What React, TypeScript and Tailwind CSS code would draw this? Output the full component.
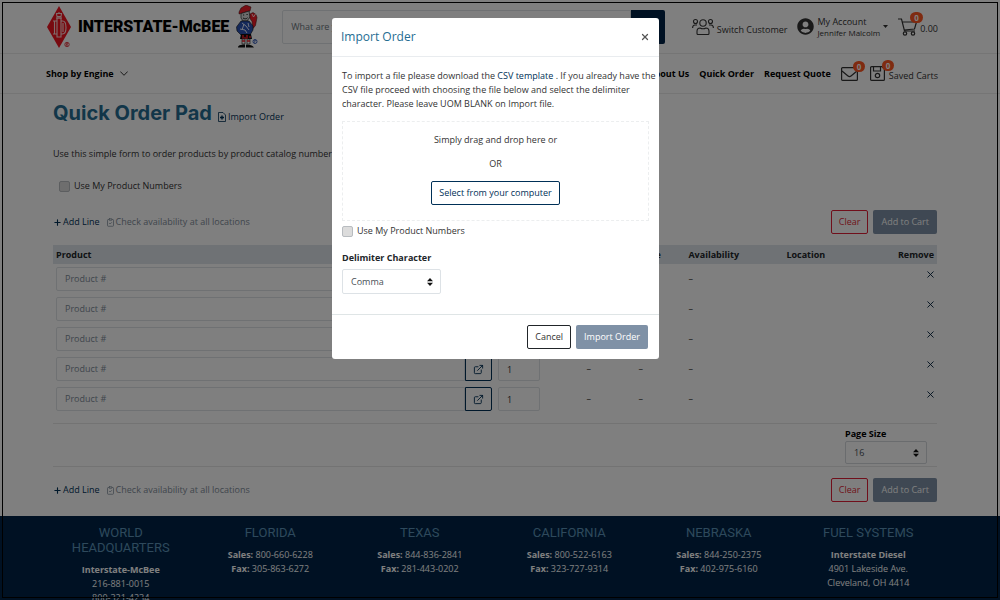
import { useState } from 'react';
import { ClipboardCheck, ExternalLink, Plus, Search, X } from 'lucide-react';
import { FaUserCircle } from 'react-icons/fa';

const lines = [1, 2, 3, 4, 5];

const offices = [
  { title: 'World Headquarters', name: 'Interstate-McBee', rows: ['216-881-0015', '800-321-4234'] },
  { title: 'Florida', sales: '800-660-6228', fax: '305-863-6272' },
  { title: 'Texas', sales: '844-836-2841', fax: '281-443-0202' },
  { title: 'California', sales: '800-522-6163', fax: '323-727-9314' },
  { title: 'Nebraska', sales: '844-250-2375', fax: '402-975-6160' },
  { title: 'Fuel Systems', name: 'Interstate Diesel', rows: ['4901 Lakeside Ave.', 'Cleveland, OH 4414'] },
];

function DiamondLogo() {
  return (
    <svg className="w-6 h-[42px]" viewBox="0 0 24 42" fill="none">
      <path d="M12 0 24 21 12 42 0 21Z" fill="#f01420" />
      <g stroke="#ffd9d9" strokeWidth="1.1">
        <path d="M9.500 7.500h5l-.5 3h-4zM12 6v1.500M9 12h6" />
        <path d="M10 12v19h4V12z" />
        <path d="M6 15h4M6 28h4M7.500 15v13M14 15h1.500c2.500 0 3.500 3 3.500 6.500s-1 6.500-3.500 6.500H14M16 17v9" />
      </g>
      <circle cx="20" cy="38.500" r="2.200" stroke="#e01f2a" strokeWidth=".8" />
      <path d="M19.300 40v-3h1.200v1.500h-1l1.200 1.500" stroke="#e01f2a" strokeWidth=".6" />
    </svg>
  );
}

function Mascot() {
  return (
    <svg className="w-[22px] h-[43px]" viewBox="0 0 22 43" fill="none">
      <path d="M3 7 5 3l5-3 5 2-1 4-7 2-4 1z" fill="#f01c28" stroke="#301010" strokeWidth=".5" />
      <path d="M5 8.500 13 6l1 6-3 4H7l-2-3z" fill="#d8d8d8" stroke="#222" strokeWidth=".7" />
      <path d="M7 10h1.200M10.500 9.500h1.200M7 13c2 1.200 3.500 1 4.500-.3" stroke="#111" strokeWidth=".9" />
      <path d="M14 9l3-1.500 3 2 1 3-1.500 8-2.500 3-1-7-2-3z" fill="#f01c28" stroke="#301010" strokeWidth=".5" />
      <path d="M16 9l1.500 3 2-3" stroke="#fff" strokeWidth=".8" />
      <path d="M5 16h8l4 5v4l-3 5H5l-4-4-.5-4z" fill="#2a52b4" stroke="#111" strokeWidth=".6" />
      <path d="M6 18l4 3 3 4M4 24l5 1 2 3M8 19l-2 6M12 18l1 4" stroke="#e6ecff" strokeWidth="1" />
      <path d="M5 29h10l1 5H4z" fill="#111" />
      <path d="M6 31h2M10 31h2M13 32h2M6 33h6" stroke="#f01c28" strokeWidth="1.400" />
      <path d="M6 34h3v5H6zM11 34h3v5h-3z" fill="#fff" stroke="#111" strokeWidth=".6" />
      <path d="M6 36h3M11 36h3" stroke="#f01c28" strokeWidth="1.300" />
      <path d="M2 42.500c0-2 2-3 7-3v3zM10 42.500v-3c4 0 7 1 8 3z" fill="#111" />
      <circle cx="19" cy="36.500" r="2" stroke="#2a52b4" strokeWidth=".9" />
      <path d="M18.500 37.800v-2.600h1v1.200" stroke="#2a52b4" strokeWidth=".6" />
    </svg>
  );
}

function UsersIcon() {
  return (
    <svg className="w-[22px] h-[17px]" viewBox="0 0 22 17" fill="none" stroke="currentColor" strokeWidth="1.1">
      <circle cx="11" cy="5" r="3.200" />
      <circle cx="3.500" cy="3.500" r="2" />
      <circle cx="18.500" cy="3.500" r="2" />
      <path d="M5 15.500v-2c0-2 1-3.500 3-3.500 1.500.8 4.500.8 6 0 2 0 3 1.500 3 3.500v2c0 .6-.4 1-1 1H6c-.6 0-1-.4-1-1z" />
      <path d="M.6 10c0-2 .6-3 2.400-3h2M21.400 10c0-2-.6-3-2.400-3h-2" />
    </svg>
  );
}

function CartIcon() {
  return (
    <svg className="w-5 h-[18px]" viewBox="0 0 20 18" fill="none" stroke="currentColor" strokeWidth="1.200">
      <path d="M0 1h3.500l3 12H17M4 4h14.500l-2 7-10.500 1" />
      <circle cx="7" cy="15.500" r="1.700" />
      <circle cx="15" cy="15.500" r="1.700" />
    </svg>
  );
}

function EnvelopeIcon() {
  return (
    <svg className="w-[17px] h-[14px]" viewBox="0 0 17 14" fill="none" stroke="currentColor" strokeWidth="1.200">
      <rect x=".6" y=".6" width="15.800" height="12.800" rx="1" />
      <path d="M1 4l6 5c1 .8 2 .8 3 0l6-5" />
    </svg>
  );
}

function SaveIcon() {
  return (
    <svg className="w-[15px] h-[15px]" viewBox="0 0 15 15" fill="none" stroke="currentColor" strokeWidth="1.200">
      <path d="M1.600.6h10.400l2.400 2.400v10.400c0 .6-.4 1-1 1H1.600c-.6 0-1-.4-1-1V1.600c0-.6.4-1 1-1z" />
      <path d="M3.500 1v4h7V1" />
      <circle cx="7.500" cy="9.500" r="2.200" />
    </svg>
  );
}

function FilePlusIcon() {
  return (
    <svg className="w-2 h-[10px]" viewBox="0 0 8 10" fill="none" stroke="currentColor">
      <path d="M.5.5h4.500l2.500 2.500v6.500h-7z" strokeWidth=".8" />
      <path d="M4 3.500v4M2 5.500h4" strokeWidth="1.400" />
    </svg>
  );
}

function Badge() {
  return (
    <span className="absolute -top-[6px] left-3 h-[11px] px-1 rounded-full bg-[#ff5722] text-white text-[8px] leading-[11px] font-bold">
      0
    </span>
  );
}

function Sorter() {
  return (
    <svg className="absolute right-2 top-1/2 -translate-y-1/2 w-[6px] h-2 pointer-events-none" viewBox="0 0 6 8" fill="#111">
      <path d="M0 3.300 3 0l3 3.300zM0 4.700h6L3 8z" />
    </svg>
  );
}

function LineActions() {
  return (
    <div className="flex items-center justify-between h-6">
      <div className="flex items-center gap-[6px]">
        <button className="flex items-center gap-px text-[#003057]">
          <Plus className="w-[9px] h-[9px]" strokeWidth={3} />
          <span>Add Line</span>
        </button>
        <button className="flex items-center gap-px text-[#7f8c99]">
          <ClipboardCheck className="w-[9px] h-[9px]" />
          <span>Check availability at all locations</span>
        </button>
      </div>
      <div className="flex gap-[5px]">
        <button className="h-6 px-[7px] border border-[#e01f36] rounded-[2px] text-[#e01f36]">Clear</button>
        <button className="h-6 px-2 rounded-[2px] bg-[#7f91a6] text-white">Add to Cart</button>
      </div>
    </div>
  );
}

function ImportModal() {
  const [delimiter, setDelimiter] = useState('Comma');

  return (
    <div className="fixed inset-0 flex items-start justify-center bg-black/50 pt-[18px] pr-[9px]">
      <div role="dialog" aria-labelledby="import-title" className="w-[327px] bg-white rounded-[3px] text-[#333]">
        <div className="flex items-center justify-between h-[39px] px-[9px] border-b border-[#e9ecef]">
          <h2 id="import-title" className="text-[12px] text-[#256d92]">Import Order</h2>
          <button aria-label="Close" className="text-[#555]">
            <X className="w-[10px] h-[10px]" strokeWidth={3} />
          </button>
        </div>

        <div className="px-[10px] pt-3 pb-5">
          <p className="-mr-2 leading-[14px]">
            To import a file please download the <a href="#template" className="text-[#003057]">CSV template</a> . If you already have the
            CSV file proceed with choosing the file below and select the delimiter
            character. Please leave UOM BLANK on Import file.
          </p>
          <div className="flex flex-col items-center gap-[10px] h-[100px] mt-[10px] pt-[11px] border border-dashed border-[#eceeef]">
            <p className="leading-[14px]">Simply drag and drop here or</p>
            <p className="leading-[14px]">OR</p>
            <button className="h-6 px-[7px] border border-[#003057] rounded-[2px] text-[#003057]">Select from your computer</button>
          </div>
          <label className="flex items-center gap-1 h-[14px] mt-[3px]">
            <input type="checkbox" className="appearance-none w-[11px] h-[11px] border border-[#b8bcc0] rounded-[2px] bg-[#dcdcdc]" />
            Use My Product Numbers
          </label>
          <label htmlFor="delimiter" className="block mt-3 leading-[16px] font-bold text-[#212529]">Delimiter Character</label>
          <div className="relative w-[99px] mt-[3px]">
            <select
              id="delimiter"
              value={delimiter}
              onChange={(e) => setDelimiter(e.target.value)}
              className="appearance-none w-full h-[25px] px-2 border border-[#dde2e6] rounded-[2px] text-[#495057]"
            >
              <option>Comma</option>
              <option>Semicolon</option>
            </select>
            <Sorter />
          </div>
        </div>

        <div className="flex items-center justify-end gap-[5px] h-[45px] px-[11px] border-t border-[#dfe5e6]">
          <button className="h-6 px-[7px] border border-[#212529] rounded-[2px]">Cancel</button>
          <button className="h-6 px-2 rounded-[2px] bg-[#7f91a6] text-white">Import Order</button>
        </div>
      </div>
    </div>
  );
}

export default function App() {
  return (
    <div className="h-screen overflow-hidden bg-white font-['Open_Sans',sans-serif] text-[9px] text-[#333]">
      <header>
        <div className="flex items-center h-[54px] pl-[47px] pr-[62px] border-b border-[#ebebeb]">
          <a href="#home" className="flex items-center shrink-0 text-black">
            <DiamondLogo />
            <span className="mx-[7px] font-['Roboto',sans-serif] text-[16px] font-black">INTERSTATE-McBEE</span>
            <Mascot />
          </a>
          <form className="flex flex-1 h-[34px] ml-6">
            <input
              aria-label="Search"
              placeholder="What are you looking for?"
              className="flex-1 min-w-0 px-2 border border-[#dfe3e6] rounded-l-[2px] placeholder:text-[#6c757d]"
            />
            <button type="button" aria-label="Search" className="flex items-center justify-center w-[34px] rounded-r-[2px] bg-[#002347] text-white">
              <Search className="w-5 h-5" />
            </button>
          </form>
          <div className="flex items-center shrink-0 ml-[27px]">
            <button className="flex items-end gap-[3px]">
              <UsersIcon />
              <span className="leading-[10px]">Switch Customer</span>
            </button>
            <button className="flex items-center gap-[3px] ml-[10px] text-left">
              <FaUserCircle className="w-[17px] h-[17px]" />
              <span className="flex flex-col leading-[11px]">
                <span>My Account</span>
                <span className="text-[8px]">Jennifer Malcolm</span>
              </span>
              <svg className="w-[5px] h-[3px]" viewBox="0 0 5 3" fill="currentColor"><path d="M0 0h5L2.500 3z" /></svg>
            </button>
            <button className="relative flex items-end gap-[2px] ml-[10px]">
              <CartIcon />
              <Badge />
              <span>0.00</span>
            </button>
          </div>
        </div>

        <nav className="flex items-center justify-between h-10 pl-[46px] pr-[62px] border-b border-[#ebebeb]">
          <button className="flex items-center gap-[6px] font-bold text-black">
            Shop by Engine
            <svg className="w-2 h-[5px]" viewBox="0 0 8 5" fill="none" stroke="currentColor" strokeWidth=".8"><path d="M.3.5 4 4.300 7.700.5" /></svg>
          </button>
          <div className="flex items-center gap-[10px]">
            <a href="#about" className="font-bold text-black">About Us</a>
            <a href="#quick-order" className="font-bold text-black">Quick Order</a>
            <a href="#quote" className="font-bold text-black">Request Quote</a>
            <a href="#messages" aria-label="Messages" className="relative">
              <EnvelopeIcon />
              <Badge />
            </a>
            <a href="#saved" className="relative flex items-end gap-1 ml-[2px]">
              <SaveIcon />
              <Badge />
              <span className="leading-[10px]">Saved Carts</span>
            </a>
          </div>
        </nav>
      </header>

      <main className="pl-[53px] pr-[63px] pt-[5px] pb-[14px]">
        <div className="flex items-center gap-[6px]">
          <h1 className="font-['Inter',sans-serif] text-[20px] leading-7 font-bold text-[#256d92]">Quick Order Pad</h1>
          <button className="flex items-center gap-[2px] mt-2 text-[#003057]">
            <FilePlusIcon />
            Import Order
          </button>
        </div>
        <p className="mt-5 leading-[14px]">
          Use this simple form to order products by product catalog number. Please enter one product per line.
        </p>
        <label className="flex items-center gap-1 h-[14px] mt-[18px] mb-[17px] ml-[6px]">
          <input type="checkbox" className="appearance-none w-[11px] h-[11px] border border-[#b8bcc0] rounded-[2px] bg-[#dcdcdc]" />
          Use My Product Numbers
        </label>
        <LineActions />

        <table className="w-full table-fixed mt-[11px]">
          <thead>
            <tr className="h-[19px] bg-[#dee4ea] text-left text-[#212529]">
              <th className="w-1/2 px-[3px]">Product</th>
              <th className="px-[3px] w-[10%]">Qty</th>
              <th className="px-[3px] w-[52px]">U/M</th>
              <th className="px-[3px] w-[50px]">Price</th>
              <th className="px-[3px] w-[98px]">Availability</th>
              <th className="px-[3px] w-[88px]">Location</th>
              <th className="px-[3px] text-right">Remove</th>
            </tr>
          </thead>
          <tbody>
            {lines.map((line) => (
              <tr key={line} className="h-[30px]">
                <td className="px-[3px]">
                  <div className="flex h-6">
                    <input
                      aria-label="Product number"
                      placeholder="Product #"
                      className="flex-1 min-w-0 px-2 border border-[#dfe3e6] rounded-l-[2px] placeholder:text-[#7f8c99]"
                    />
                    <button aria-label="Open catalog" className="flex items-center justify-center w-[27px] border border-[#003057] rounded-r-[2px] text-[#003057]">
                      <ExternalLink className="w-[11px] h-[11px]" />
                    </button>
                  </div>
                </td>
                <td className="px-[3px]">
                  <input aria-label="Quantity" defaultValue="1" className="w-[42px] h-6 px-2 border border-[#dfe3e6] rounded-[2px]" />
                </td>
                <td className="px-[3px]">–</td>
                <td className="px-[3px]">–</td>
                <td className="px-[3px]">–</td>
                <td></td>
                <td className="px-px pt-[5px] align-top text-right">
                  <button aria-label="Remove line" className="align-top text-[#00203c]">
                    <X className="w-[11px] h-[11px]" strokeWidth={2} />
                  </button>
                </td>
              </tr>
            ))}
          </tbody>
        </table>

        <div className="flex justify-end h-11 mt-[9px] mb-[11px] pt-[3px] pr-[10px] border-y border-[#e6e6e6]">
          <div>
            <label htmlFor="page-size" className="block leading-[14px] font-bold text-black">Page Size</label>
            <div className="relative w-[82px]">
              <select id="page-size" className="appearance-none w-full h-[23px] px-2 border border-[#d4d8dc] rounded-[2px] text-[#495057]">
                <option>16</option>
                <option>32</option>
              </select>
              <Sorter />
            </div>
          </div>
        </div>
        <LineActions />
      </main>

      <footer className="grid grid-cols-6 h-[120px] pl-[46px] pr-[57px] pt-[9px] bg-[#002347] text-center text-white">
        {offices.map((office) => (
          <div key={office.title} className="px-4 leading-[14px]">
            <h3 className="mb-2 font-['Roboto',sans-serif] text-[13px] leading-[15px] uppercase text-[#5c93b8]">{office.title}</h3>
            {office.name && <p className="font-bold">{office.name}</p>}
            {office.rows?.map((row) => <p key={row}>{row}</p>)}
            {office.sales && <p><b>Sales:</b> {office.sales}</p>}
            {office.fax && <p><b>Fax:</b> {office.fax}</p>}
          </div>
        ))}
      </footer>

      <ImportModal />
      <div className="fixed inset-[2px] border border-black pointer-events-none"></div>
    </div>
  );
}
